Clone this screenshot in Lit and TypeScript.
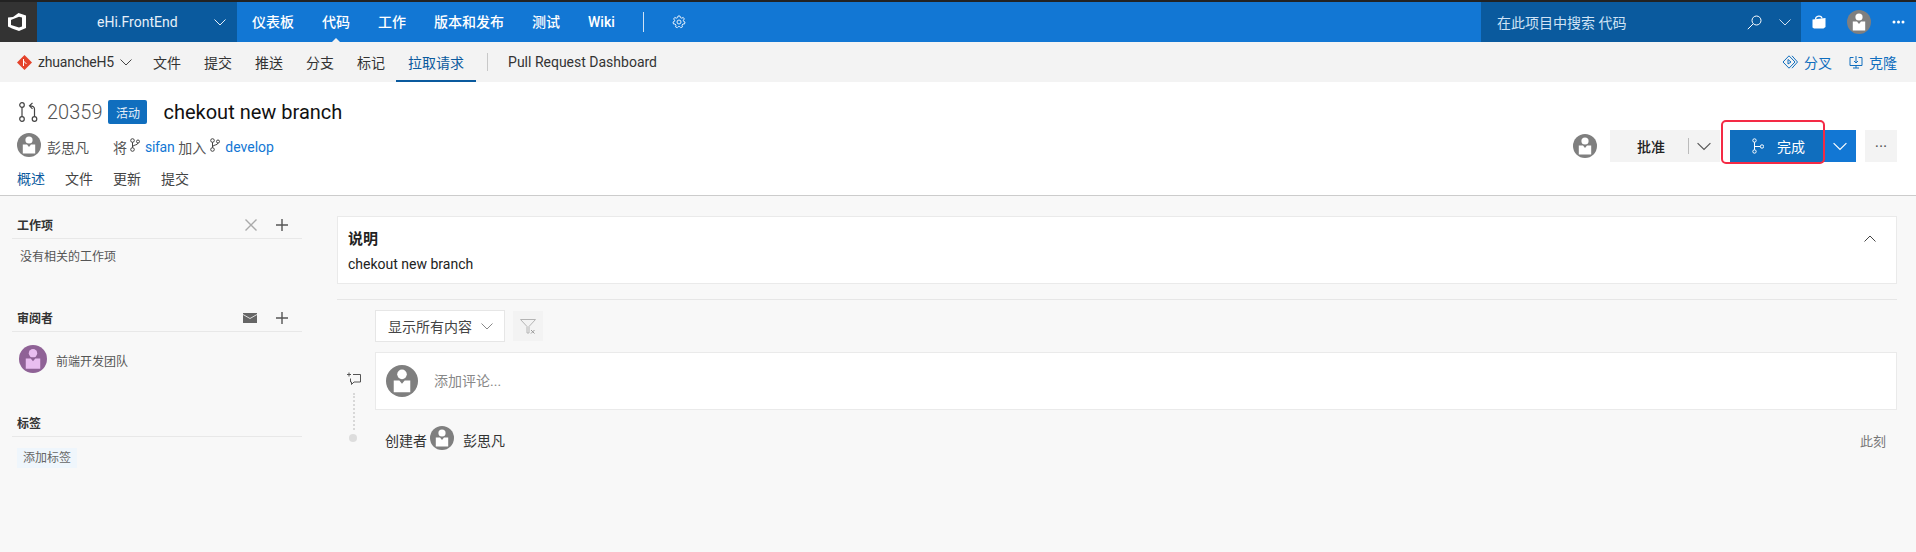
import { css, html, LitElement, svg, TemplateResult } from "lit";
import { customElement } from "lit/decorators.js";

const chevron = (size = 12, stroke = "currentColor"): TemplateResult => html`<svg
    width=${size}
    height=${size}
    viewBox="0 0 12 12"
    fill="none"
    stroke=${stroke}
    stroke-width="1"
>
    <path d="M0.5 3.5 L6 9 L11.5 3.5" />
</svg>`;

const avatar = (size: number, bg = "#7f7f7f", fg = "#fff"): TemplateResult => html`<svg
    class="avatar"
    width=${size}
    height=${size}
    viewBox="0 0 24 24"
>
    <circle cx="12" cy="12" r="12" fill=${bg} />
    <circle cx="12" cy="7" r="3.6" fill=${fg} />
    <path d="M5.8 11.6 H10 L12 14 L14 11.6 H18.2 V20.4 H5.8 Z" fill=${fg} />
</svg>`;

const branch = (color: string): TemplateResult => html`<svg
    class="branch"
    width="10"
    height="14"
    viewBox="0 0 10 14"
    fill="none"
    stroke=${color}
>
    <circle cx="2.5" cy="2.5" r="1.8" />
    <circle cx="2.5" cy="11.5" r="1.8" />
    <circle cx="8" cy="3.5" r="1.5" />
    <path d="M2.5 4.3 V9.7 M8 5 C8 7.5 2.5 6.5 2.5 9" />
</svg>`;

const plus = svg`<path d="M6 0 V12 M0 6 H12" stroke="#555" stroke-width="1.4" fill="none" />`;

@customElement("app-root")
export class AppRoot extends LitElement {
    render(): TemplateResult {
        return html`
            <div class="strip"></div>
            <header class="top">
                <div class="logo">
                    <svg width="18" height="18" viewBox="0 0 18 18">
                        <path
                            fill="#fff"
                            fill-rule="evenodd"
                            d="M10.5 0 L18 2.5 V15 L11 18 L4 15.5 L0 13.5 V4.5 L5 4 Z M4 6.5 L3 7 V12 L11 14.5 L14 13.5 V4.5 L11 3.8 Z"
                        />
                    </svg>
                </div>
                <div class="project">
                    <span>eHi.FrontEnd</span>
                    ${chevron(12)}
                </div>
                <nav class="nav">
                    <a>仪表板</a>
                    <a class="on">代码</a>
                    <a>工作</a>
                    <a>版本和发布</a>
                    <a>测试</a>
                    <a>Wiki</a>
                    <i class="nav-sep"></i>
                    <svg width="14" height="14" viewBox="0 0 14 14" fill="none" stroke="#e4effa">
                        <circle cx="7" cy="7" r="2" />
                        <path
                            d="M6 1 H8 L8.4 2.6 L9.8 3.2 L11.2 2.4 L12.4 4 L11.3 5.2 L11.5 6.3 L13 7 L12.5 9 L10.9 9 L10 10.2 L10.5 11.8 L8.8 12.7 L7.8 11.6 H6.2 L5.2 12.7 L3.5 11.8 L4 10.2 L3.1 9 L1.5 9 L1 7 L2.5 6.3 L2.7 5.2 L1.6 4 L2.8 2.4 L4.2 3.2 L5.6 2.6 Z"
                        />
                    </svg>
                </nav>
                <div class="search">
                    <span>在此项目中搜索 代码</span>
                    <svg class="lens" width="15" height="15" viewBox="0 0 15 15" fill="none" stroke="#fff">
                        <circle cx="9.5" cy="5.5" r="4.5" />
                        <path d="M6.2 8.8 L0.8 14.2" />
                    </svg>
                    ${chevron(12, "#cfe0f0")}
                </div>
                <div class="top-end">
                    <svg width="14" height="14" viewBox="0 0 14 14">
                        <path d="M0.5 4.5 L13.5 3 V12 L11.5 13.5 H2 L0.5 12.5 Z" fill="#fff" />
                        <path d="M3.5 4.5 C3.5 0.5 9.5 0 10 3.5" fill="none" stroke="#fff" stroke-width="1.2" />
                    </svg>
                    ${avatar(24)}
                    <svg class="dots" width="13" height="4" viewBox="0 0 13 4" fill="#fff">
                        <circle cx="2" cy="2" r="1.5" />
                        <circle cx="6.5" cy="2" r="1.5" />
                        <circle cx="11" cy="2" r="1.5" />
                    </svg>
                </div>
            </header>
            <div class="sub">
                <svg width="15" height="15" viewBox="0 0 15 15">
                    <path d="M7.5 0 L15 7.5 L7.5 15 L0 7.5 Z" fill="#e4432b" />
                    <path d="M6.5 4 V11 M6.5 6 L9.5 9" stroke="#fff" fill="none" />
                </svg>
                <span class="repo">zhuancheH5</span>
                <span class="repo-chev">${chevron(12)}</span>
                <a>文件</a>
                <a>提交</a>
                <a>推送</a>
                <a>分支</a>
                <a>标记</a>
                <a class="on">拉取请求</a>
                <i class="sub-sep"></i>
                <a class="dash">Pull Request Dashboard</a>
                <div class="sub-end">
                    <span>
                        <svg width="16" height="14" viewBox="0 0 16 14" fill="none" stroke="#106ebe">
                            <path d="M7 0.8 L13 7 L7 13.2 L1 7 Z M10 0.8 L15.5 7 L10 13.2" />
                            <path d="M6 4.5 V9 L9 7 Z" />
                        </svg>
                        分叉
                    </span>
                    <span class="clone">
                        <svg width="14" height="14" viewBox="0 0 14 14" fill="none" stroke="#106ebe">
                            <path d="M4.5 2.5 H1 V10.5 H13 V2.5 H9.5 M7 1 V8 M5 6 L7 8 L9 6 M4 13 H10 M7 10.5 V13" />
                        </svg>
                        克隆
                    </span>
                </div>
            </div>
            <section class="head">
                <div class="head-main">
                    <div class="title-row">
                        <svg class="pr-icon" width="19" height="20" viewBox="0 0 19 20" fill="none" stroke="#444" stroke-width="1.2">
                            <circle cx="3" cy="3" r="2.3" />
                            <circle cx="3" cy="17" r="2.3" />
                            <circle cx="15.5" cy="17" r="2.3" />
                            <path d="M3 5.3 V14.7 M15.5 14.7 V7 C15.5 5 14 3.8 11 3.8 M13.5 0.8 L10.5 3.8 L13.5 6.8" />
                        </svg>
                        <span class="pr-id">20359</span>
                        <span class="badge">活动</span>
                        <h1>chekout new branch</h1>
                    </div>
                    <div class="meta">
                        ${avatar(24)}
                        <span class="who">彭思凡</span>
                        <span class="jiang">将</span>
                        ${branch("#444")}
                        <a class="source">sifan</a>
                        <span class="into">加入</span>
                        ${branch("#444")}
                        <a>develop</a>
                    </div>
                    <div class="tabs">
                        <a class="on">概述</a>
                        <a>文件</a>
                        <a>更新</a>
                        <a>提交</a>
                    </div>
                </div>
                <div class="actions">
                    ${avatar(24)}
                    <div class="approve">
                        <span class="approve-label">批准</span>
                        <i></i>
                        ${chevron(14, "#555")}
                    </div>
                    <div class="done">
                        <div class="done-main">
                            <svg width="12" height="16" viewBox="0 0 12 16" fill="none" stroke="#fff">
                                <circle cx="2.5" cy="2.5" r="1.7" />
                                <circle cx="2.5" cy="13.5" r="1.7" />
                                <circle cx="10" cy="8.5" r="1.7" />
                                <path d="M2.5 4.2 V11.8 M2.5 8.5 H8.3" />
                            </svg>
                            <span>完成</span>
                        </div>
                        <div class="done-more">${chevron(14, "#fff")}</div>
                        <div class="mark"></div>
                    </div>
                    <div class="more">···</div>
                </div>
            </section>
            <div class="body">
                <aside class="side">
                    <section class="panel first">
                        <div class="panel-head">
                            <h3>工作项</h3>
                            <svg width="12" height="12" viewBox="0 0 12 12">
                                <path d="M0.5 0.5 L11.5 11.5 M11.5 0.5 L0.5 11.5" stroke="#aaa" stroke-width="1.4" />
                            </svg>
                            <svg width="12" height="12" viewBox="0 0 12 12">${plus}</svg>
                        </div>
                        <p>没有相关的工作项</p>
                    </section>
                    <section class="panel">
                        <div class="panel-head">
                            <h3>审阅者</h3>
                            <svg width="14" height="10" viewBox="0 0 14 10">
                                <rect width="14" height="10" fill="#666" />
                                <path d="M0 1.5 L7 5.5 L14 1.5" fill="none" stroke="#ddd" />
                            </svg>
                            <svg width="12" height="12" viewBox="0 0 12 12">${plus}</svg>
                        </div>
                        <div class="reviewer">
                            ${avatar(28, "#8f6296", "#e9bdf0")}
                            <span>前端开发团队</span>
                        </div>
                    </section>
                    <section class="panel">
                        <div class="panel-head"><h3>标签</h3></div>
                        <span class="add-tag">添加标签</span>
                    </section>
                </aside>
                <main class="main">
                    <div class="desc">
                        <h2>说明</h2>
                        <div>chekout new branch</div>
                        <svg class="collapse" width="12" height="12" viewBox="0 0 12 12" fill="none" stroke="#444">
                            <path d="M0.5 8.5 L6 3 L11.5 8.5" />
                        </svg>
                    </div>
                    <div class="rule"></div>
                    <div class="filters">
                        <div class="select">显示所有内容 ${chevron(12, "#888")}</div>
                        <div class="funnel">
                            <svg width="16" height="15" viewBox="0 0 16 15" fill="none" stroke="#b4b4b4">
                                <path d="M0.5 0.5 H15.5 L9 7.5 V14 H7 V7.5 Z" />
                                <path d="M11 11 L14.5 14.5 M14.5 11 L11 14.5" stroke="#999" />
                            </svg>
                        </div>
                    </div>
                    <div class="thread">
                        <div class="rail">
                            <svg width="14" height="14" viewBox="0 0 14 14" fill="none" stroke="#555">
                                <path d="M0 2.5 H4 M2 0.5 V4.5 M6 2.5 H13.5 V10 H7 L4.5 12.5 V10 H3.5 V6.5" />
                            </svg>
                            <i class="dash-line"></i>
                            <i class="dot"></i>
                        </div>
                        <div class="thread-main">
                            <div class="comment">
                                ${avatar(32)}
                                <span>添加评论...</span>
                            </div>
                            <div class="created">
                                <span>创建者</span>
                                ${avatar(24)}
                                <span class="by">彭思凡</span>
                                <time>此刻</time>
                            </div>
                        </div>
                    </div>
                </main>
            </div>
        `;
    }

    static styles = css`
        :host {
            display: block;
            min-height: 552px;
            background: #f8f8f8;
            color: #222;
            font-family: Roboto, "Noto Sans CJK SC", sans-serif;
            font-size: 14px;
        }
        a {
            cursor: pointer;
        }
        .strip {
            height: 2px;
            background: #222;
        }
        .top {
            display: flex;
            align-items: stretch;
            height: 40px;
            background: #1277d4;
            color: #fff;
        }
        .logo {
            width: 37px;
            box-sizing: border-box;
            padding-left: 8px;
            flex: none;
            display: flex;
            align-items: center;
            background: #333;
        }
        .project {
            width: 200px;
            box-sizing: border-box;
            padding: 0 11px 0 60px;
            flex: none;
            display: flex;
            align-items: center;
            justify-content: space-between;
            background: #0a5a9e;
            color: #e6f0f9;
        }
        .nav {
            display: flex;
            align-items: center;
            gap: 28px;
            padding-left: 15px;
            font-weight: 500;
            flex: 1;
        }
        .nav a {
            position: relative;
            line-height: 40px;
        }
        .nav a.on::after {
            content: "";
            position: absolute;
            left: 50%;
            bottom: 0;
            margin-left: -4px;
            border: 4px solid transparent;
            border-top: 0;
            border-bottom-color: #f3f3f3;
        }
        .nav-sep {
            width: 1px;
            height: 20px;
            background: #cfe2f5;
        }
        .search {
            width: 320px;
            box-sizing: border-box;
            flex: none;
            display: flex;
            align-items: center;
            padding: 0 10px 0 16px;
            background: #0a5a9e;
            color: #cfe3f5;
        }
        .search span {
            flex: 1;
        }
        .lens {
            margin-right: 17px;
        }
        .top-end {
            width: 115px;
            flex: none;
            box-sizing: border-box;
            display: flex;
            align-items: center;
            padding: 0 11px;
            justify-content: space-between;
        }
        .avatar {
            flex: none;
            display: block;
        }
        .sub {
            display: flex;
            align-items: center;
            height: 40px;
            padding-left: 17px;
            background: #f3f3f3;
            color: #333;
        }
        .repo {
            margin-left: 6px;
            letter-spacing: -0.2px;
        }
        .repo-chev {
            display: flex;
            margin: 0 21px 0 6px;
            color: #444;
        }
        .sub > a {
            display: flex;
            align-items: center;
            height: 40px;
            box-sizing: border-box;
            margin-right: 23px;
        }
        .sub > a.on {
            padding: 2px 12px 0;
            margin: 0 0 0 -12px;
            color: #0a5a9e;
            border-bottom: 2px solid #0a5a9e;
        }
        .sub-sep {
            width: 1px;
            height: 18px;
            margin: 0 20px 0 11px;
            background: #c8c8c8;
        }
        .sub-end {
            margin-left: auto;
            display: flex;
            gap: 17px;
            padding-right: 19px;
            color: #106ebe;
        }
        .sub-end span {
            display: flex;
            align-items: center;
            gap: 6px;
        }
        .head {
            display: flex;
            justify-content: space-between;
            align-items: flex-start;
            height: 114px;
            box-sizing: border-box;
            padding: 18px 19px 0 17px;
            background: #fff;
            border-bottom: 1px solid #ccc;
        }
        .title-row {
            display: flex;
            align-items: center;
            height: 24px;
            margin-bottom: 9px;
        }
        .pr-icon {
            margin-left: 2px;
        }
        .pr-id {
            margin-left: 9px;
            font-size: 20px;
            font-weight: 300;
            color: #555;
        }
        .badge {
            margin-left: 6px;
            width: 39px;
            height: 24px;
            display: flex;
            align-items: center;
            justify-content: center;
            font-size: 12px;
            color: #e6f0f9;
            background: #106ebe;
            border-radius: 2px;
        }
        h1 {
            margin: 0 0 0 16px;
            font-size: 20px;
            font-weight: 400;
            color: #111;
        }
        .meta {
            display: flex;
            align-items: center;
            height: 24px;
            color: #555;
            margin-bottom: 12px;
        }
        .meta span,
        .meta a {
            padding-top: 3px;
        }
        .meta .who {
            margin-left: 6px;
        }
        .meta .jiang {
            margin: 0 3px 0 24px;
        }
        .meta a {
            color: #1277d4;
            margin-left: 5px;
        }
        .meta .source {
            letter-spacing: -0.3px;
        }
        .meta .into {
            margin: 0 4px 0 4px;
        }
        .tabs {
            display: flex;
            gap: 20px;
            line-height: 20px;
            color: #444;
        }
        .tabs .on {
            color: #0a5a9e;
        }
        .actions {
            display: flex;
            align-items: center;
            margin-top: 30px;
        }
        .approve {
            margin-left: 13px;
            width: 110px;
            box-sizing: border-box;
            height: 32px;
            padding: 0 9px 0 27px;
            display: flex;
            align-items: center;
            background: #f3f3f3;
            font-weight: 500;
        }
        .approve-label {
            flex: 1;
        }
        .approve i {
            width: 1px;
            height: 16px;
            margin-right: 8px;
            background: #bbb;
        }
        .done {
            position: relative;
            display: flex;
            height: 32px;
            margin-left: 10px;
            color: #fff;
        }
        .done-main {
            width: 93px;
            box-sizing: border-box;
            display: flex;
            align-items: center;
            gap: 13px;
            padding-left: 22px;
            background: #106ebe;
        }
        .done-more {
            width: 33px;
            display: flex;
            align-items: center;
            justify-content: center;
            background: #1277d4;
        }
        .mark {
            position: absolute;
            left: -9px;
            top: -10px;
            width: 104px;
            height: 44px;
            box-sizing: border-box;
            border: 2px solid #f42a45;
            border-radius: 5px;
        }
        .more {
            margin-left: 9px;
            width: 32px;
            height: 32px;
            display: flex;
            align-items: center;
            justify-content: center;
            background: #f3f3f3;
            color: #555;
            font-size: 16px;
        }
        .body {
            display: flex;
            padding: 18px 19px 0 12px;
        }
        .side {
            width: 290px;
            flex: none;
            margin-right: 35px;
        }
        .panel {
            height: 105px;
        }
        .panel.first {
            height: 93px;
        }
        .panel-head {
            display: flex;
            align-items: center;
            height: 22px;
            padding: 0 14px 2px 5px;
            border-bottom: 1px solid #e8e8e8;
            gap: 19px;
        }
        .panel-head svg {
            flex: none;
        }
        h3 {
            flex: 1;
            margin: -2px 0 0;
            font-size: 12px;
            font-weight: 600;
            color: #333;
        }
        .panel p {
            margin: 8px 0 0 8px;
            font-size: 12px;
            color: #555;
        }
        .reviewer {
            display: flex;
            align-items: center;
            gap: 9px;
            margin: 13px 0 0 7px;
            font-size: 12px;
            color: #555;
        }
        .reviewer span {
            padding-top: 3px;
        }
        .add-tag {
            display: inline-block;
            margin: 11px 0 0 5px;
            padding: 0 6px;
            line-height: 20px;
            background: #eff6fc;
            color: #666;
            font-size: 12px;
        }
        .main {
            flex: 1;
            min-width: 0;
            margin-top: 2px;
        }
        .desc {
            position: relative;
            height: 68px;
            box-sizing: border-box;
            padding: 12px 10px 0;
            line-height: 20px;
            background: #fff;
            border: 1px solid #eaeaea;
        }
        h2 {
            margin: 0 0 5px;
            font-size: 15px;
            line-height: 20px;
            font-weight: 600;
        }
        .collapse {
            position: absolute;
            right: 20px;
            top: 16px;
        }
        .rule {
            height: 1px;
            margin: 15px 0 10px;
            background: #e6e6e6;
        }
        .filters {
            display: flex;
            align-items: center;
            margin-left: 38px;
            gap: 8px;
        }
        .select {
            display: flex;
            align-items: center;
            justify-content: space-between;
            width: 130px;
            height: 32px;
            box-sizing: border-box;
            padding: 0 11px 0 12px;
            background: #fff;
            border: 1px solid #e6e6e6;
            color: #444;
        }
        .funnel {
            width: 30px;
            height: 30px;
            display: flex;
            align-items: center;
            justify-content: center;
            background: #f3f3f3;
        }
        .thread {
            display: flex;
            margin-top: 10px;
        }
        .rail {
            width: 38px;
            flex: none;
            display: flex;
            flex-direction: column;
            align-items: flex-start;
            padding: 20px 0 0 10px;
            box-sizing: border-box;
        }
        .dash-line {
            height: 37px;
            margin: 7px 0 0 6px;
            border-left: 2px dotted #d8d8d8;
        }
        .dot {
            width: 8px;
            height: 8px;
            margin: 4px 0 0 2px;
            border-radius: 50%;
            background: #ddd;
        }
        .thread-main {
            flex: 1;
            min-width: 0;
        }
        .comment {
            display: flex;
            align-items: center;
            gap: 16px;
            height: 58px;
            box-sizing: border-box;
            padding-left: 10px;
            background: #fff;
            border: 1px solid #eaeaea;
            color: #888;
        }
        .comment span {
            padding-bottom: 3px;
        }
        .created {
            display: flex;
            align-items: center;
            gap: 3px;
            margin-top: 15px;
            padding-left: 10px;
            color: #333;
        }
        .created span {
            padding-top: 4px;
        }
        .created .by {
            margin-left: 6px;
            flex: 1;
        }
        .created time {
            font-size: 13px;
            color: #777;
            margin: 6px 11px 0 0;
        }
    `;
}
